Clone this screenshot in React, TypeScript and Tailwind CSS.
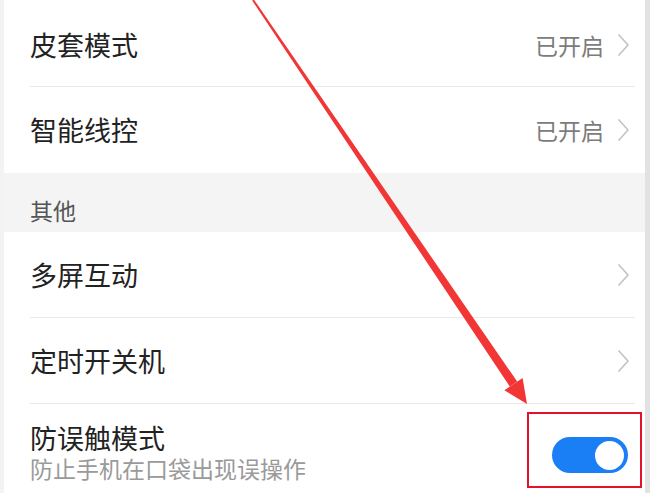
import React from "react";

const font = { fontFamily: '"Noto Sans CJK SC", "Noto Sans", sans-serif' };

function Chevron() {
  return (
    <svg width="13" height="24" viewBox="0 0 13 24" className="ml-[13px]">
      <path d="M2 2 L11 12 L2 22" fill="none" stroke="#c4c4c4" strokeWidth="1.7" strokeLinecap="round" strokeLinejoin="round" />
    </svg>
  );
}

function Row({ title, value, h }: { title: string; value?: string; h: string }) {
  return (
    <div className={`flex items-center pl-[26px] pr-[15px] ${h}`}>
      <div className="flex-1 text-[27px] leading-[32px] text-[#222222]">{title}</div>
      {value && <div className="text-[23px] leading-[28px] text-[#7c7c7c]">{value}</div>}
      <Chevron />
    </div>
  );
}

function Divider() {
  return <div className="ml-[26px] mr-[10px] h-px bg-[#e9e9e9]" />;
}

export default function App() {
  return (
    <div className="relative w-[650px] h-[493px] overflow-hidden bg-[#f1f1f1] flex" style={font}>
      <div className="w-[4px] bg-[#f3f3f3]" />
      <div className="flex-1 flex flex-col bg-white pt-[3px]">
        <Row title="皮套模式" value="已开启" h="h-[83px]" />
        <Divider />
        <Row title="智能线控" value="已开启" h="h-[86px]" />
        <div className="h-[59px] bg-[#f4f4f4] flex items-end pl-[26px] pb-[10px]">
          <span className="text-[23px] leading-[24px] text-[#555555]">其他</span>
        </div>
        <Row title="多屏互动" h="h-[85px]" />
        <Divider />
        <Row title="定时开关机" h="h-[85px]" />
        <Divider />
        <div className="flex pl-[26px] pr-[17px] flex-1">
          <div className="flex-1 flex flex-col pt-[20px]">
            <span className="text-[27px] leading-[28px] text-[#222222]">防误触模式</span>
            <span className="mt-[3px] text-[23px] leading-[26px] text-[#9a9a9a]">防止手机在口袋出现误操作</span>
          </div>
          <div className="pt-[33px]">
            <div className="w-[76px] h-[36px] rounded-full bg-[#1a7ef5] flex items-center justify-end pr-[4px]">
              <div className="w-[29px] h-[29px] rounded-full bg-white" />
            </div>
          </div>
        </div>
      </div>
      <div className="w-[5px] bg-[#e2e2e2]" />

      <div className="absolute left-[527px] top-[412px] w-[115px] h-[76px] border-2 border-[#e5102c]" />

      <svg className="absolute left-0 top-0 pointer-events-none" width="650" height="493" viewBox="0 0 650 493">
        <polygon points="253.8,-0.6 517.2,381.6 509.8,386.6 252.2,0.6" fill="#f23535" />
        <polygon points="527,404 522.6,377.9 504.4,390.3" fill="#f23535" />
      </svg>
    </div>
  );
}
